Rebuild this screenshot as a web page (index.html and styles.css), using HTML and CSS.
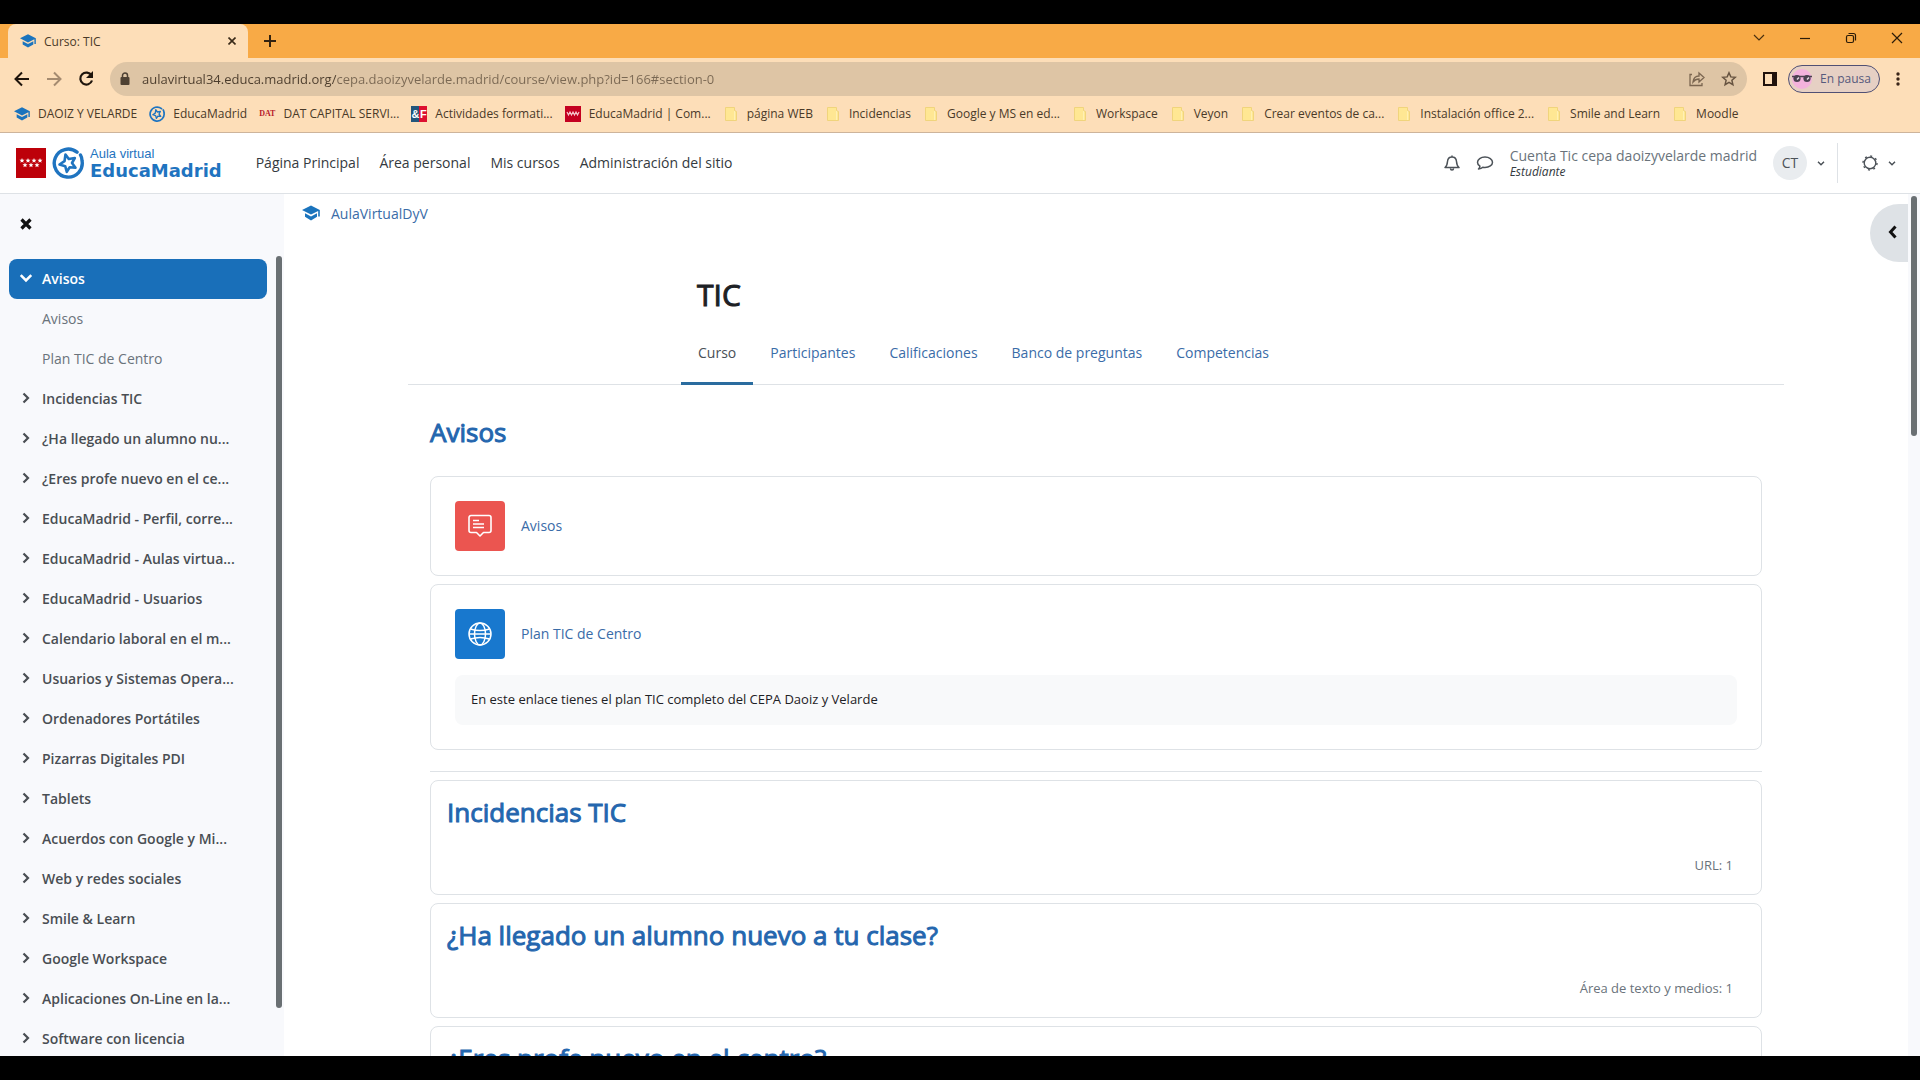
FILE: index.html
```html
<!DOCTYPE html>
<html lang="es">
<head>
    <meta charset="UTF-8">
    <meta name="viewport" content="width=device-width, initial-scale=1.0">
    <title>Curso: TIC</title>
    <link rel="stylesheet" href="styles.css">
</head>
<body>
    <!-- Iconos reutilizados -->
    <svg class="sprite" aria-hidden="true">
        <symbol id="cap" viewBox="0 0 18 16">
            <path fill="#1b74bd" d="M9 0.5L0 5l9 4.6L16.2 6v5.5h1.6V5z"/>
            <path fill="#1b74bd" d="M3 8.2v3.6L9 15.4l6-3.6V8.2l-6 3.2z"/>
        </symbol>
        <symbol id="educa" viewBox="0 0 32 32">
            <g fill="none" stroke="#1f74c0" stroke-linecap="round" stroke-linejoin="round">
                <path stroke-width="3.4" d="M25 5.2A14 14 0 1 0 30 13.500c0-2.200-.6-4-1.500-5.500"/>
                <path stroke-width="2.600" d="M13.500 7.500l3.300 4.500 6-1-2.800 5 3.500 4.800-5.800-.5-2.900 4.500-1.600-5.600-5.700-1.700 5-3.300z"/>
            </g>
        </symbol>
        <symbol id="folder" viewBox="0 0 16 16">
            <path fill="#ffe793" stroke="#f0d47c" d="M2.500 1.500h9v3l2 1v9h-11z"/>
            <path fill="none" stroke="#fff0b4" d="M11.500 5v9"/>
        </symbol>
        <symbol id="right" viewBox="0 0 10 12">
            <path fill="none" stroke="currentColor" stroke-width="2.200" d="M2.500 1.500L7 6l-4.500 4.500"/>
        </symbol>
        <symbol id="down" viewBox="0 0 12 10">
            <path fill="none" stroke="currentColor" stroke-width="2.200" d="M1.500 2.500L6 7l4.500-4.500"/>
        </symbol>
    </svg>

    <!-- Pestañas del navegador -->
    <div class="tab-strip">
        <div class="tab">
            <svg class="icon-16"><use href="#cap"/></svg>
            <span class="tab-title">Curso: TIC</span>
            <button class="icon-btn" aria-label="Cerrar pestaña">
                <svg width="8" height="8" viewBox="0 0 8 8"><path stroke="#3a2a18" stroke-width="1.600" d="M.5.5l7 7M7.500.5l-7 7"/></svg>
            </button>
        </div>
        <button class="icon-btn" aria-label="Nueva pestaña">
            <svg width="12" height="12" viewBox="0 0 12 12"><path stroke="#33220f" stroke-width="2" d="M6 0v12M0 6h12"/></svg>
        </button>
        <div class="window-buttons">
            <button class="icon-btn" aria-label="Buscar pestañas"><svg width="12" height="12" viewBox="0 0 12 12"><path fill="none" stroke="#4a3010" stroke-width="1.200" d="M1 3l5 5 5-5"/></svg></button>
            <button class="icon-btn" aria-label="Minimizar"><svg width="12" height="12" viewBox="0 0 12 12"><path stroke="#2c1c08" stroke-width="1.200" d="M1 6.500h10"/></svg></button>
            <button class="icon-btn" aria-label="Restaurar"><svg width="12" height="12" viewBox="0 0 12 12"><g fill="none" stroke="#2c1c08" stroke-width="1.200"><rect x="1.500" y="3.500" width="7" height="7" rx="1.500"/><path d="M3.500 1.500h5a2 2 0 0 1 2 2v5"/></g></svg></button>
            <button class="icon-btn" aria-label="Cerrar"><svg width="12" height="12" viewBox="0 0 12 12"><path stroke="#2c1c08" stroke-width="1.200" d="M1 1l10 10M11 1L1 11"/></svg></button>
        </div>
    </div>

    <!-- Barra de direcciones -->
    <div class="toolbar">
        <button class="icon-btn" aria-label="Atrás"><svg width="16" height="16" viewBox="0 0 16 16"><path fill="none" stroke="#1f150c" stroke-width="2" d="M15 8H2M8 1.500L1.500 8 8 14.500"/></svg></button>
        <button class="icon-btn" aria-label="Adelante"><svg width="16" height="16" viewBox="0 0 16 16"><path fill="none" stroke="#a58b70" stroke-width="2" d="M1 8h13M8 1.500L14.500 8 8 14.500"/></svg></button>
        <button class="icon-btn" aria-label="Recargar"><svg width="16" height="16" viewBox="0 0 16 16"><path fill="none" stroke="#1f150c" stroke-width="2.200" d="M13.500 4.500A6 6 0 1 0 14 9.500"/><path fill="#1f150c" d="M15 0v7H8z"/></svg></button>
        <div class="address">
            <svg width="10" height="14" viewBox="0 0 10 14"><rect x="0.500" y="5" width="9" height="8" rx="1" fill="#4e4133"/><path fill="none" stroke="#4e4133" stroke-width="1.500" d="M2.500 6V3.500a2.500 2.500 0 0 1 5 0V6"/></svg>
            <input class="address-input" type="text" aria-label="Dirección" value="aulavirtual34.educa.madrid.org/cepa.daoizyvelarde.madrid/course/view.php?id=166#section-0">
            <button class="icon-btn" aria-label="Compartir"><svg width="16" height="16" viewBox="0 0 16 16"><path fill="none" stroke="#7b6650" stroke-width="1.300" d="M3 3.500H1v11h12V12M4 11c.5-4 3-6 6-6V2l5 4.500-5 4.500V8c-3 0-4.500 1-6 3z"/></svg></button>
            <button class="icon-btn" aria-label="Añadir a marcadores"><svg width="16" height="16" viewBox="0 0 16 16"><path fill="none" stroke="#675441" stroke-width="1.500" d="M8 1.800l1.800 4.100 4.500.4-3.400 3 1 4.400L8 11.400l-3.900 2.300 1-4.400-3.400-3 4.500-.4z"/></svg></button>
        </div>
        <button class="icon-btn" aria-label="Panel lateral"><svg width="14" height="14" viewBox="0 0 14 14"><path fill="none" stroke="#20120c" stroke-width="2" d="M1 1h12v12H1z"/><path fill="#20120c" d="M9 1h4v12H9z"/></svg></button>
        <button class="profile">
            <svg width="20" height="20" viewBox="0 0 20 20"><circle cx="10" cy="10" r="10" fill="#f3b2dc"/><circle cx="5" cy="9.500" r="3.600" fill="#4b4150"/><circle cx="15" cy="9.500" r="3.600" fill="#4b4150"/><path stroke="#4b4150" stroke-width="1.500" d="M0 7.500h20"/><path stroke="#e8dce6" stroke-width="1.500" d="M5 10.500l2-2M15 10.500l2-2"/></svg>
            En pausa
        </button>
        <button class="icon-btn" aria-label="Menú"><svg width="4" height="14" viewBox="0 0 4 14"><g fill="#3a2418"><circle cx="2" cy="2" r="1.700"/><circle cx="2" cy="7" r="1.700"/><circle cx="2" cy="12" r="1.700"/></g></svg></button>
    </div>

    <nav class="bookmarks" aria-label="Marcadores">
        <a href="#"><svg class="icon-16"><use href="#cap"/></svg>DAOIZ Y VELARDE</a>
        <a href="#"><svg class="icon-16"><use href="#educa"/></svg>EducaMadrid</a>
        <a href="#"><span class="dat">DAT</span>DAT CAPITAL SERVI...</a>
        <a href="#"><span class="af"><b>&amp;</b><b>F</b></span>Actividades formati...</a>
        <a href="#"><svg class="icon-16" viewBox="0 0 16 16"><path fill="#c40020" d="M0 0h16v16H0z"/><path fill="none" stroke="#f6c9cf" stroke-width="1.200" d="M2 6l1.500 3L5 6l1.500 3L8 6l1.500 3L11 6l1.500 3L14 6"/></svg>EducaMadrid | Com...</a>
        <a href="#"><svg class="icon-16"><use href="#folder"/></svg>página WEB</a>
        <a href="#"><svg class="icon-16"><use href="#folder"/></svg>Incidencias</a>
        <a href="#"><svg class="icon-16"><use href="#folder"/></svg>Google y MS en ed...</a>
        <a href="#"><svg class="icon-16"><use href="#folder"/></svg>Workspace</a>
        <a href="#"><svg class="icon-16"><use href="#folder"/></svg>Veyon</a>
        <a href="#"><svg class="icon-16"><use href="#folder"/></svg>Crear eventos de ca...</a>
        <a href="#"><svg class="icon-16"><use href="#folder"/></svg>Instalación office 2...</a>
        <a href="#"><svg class="icon-16"><use href="#folder"/></svg>Smile and Learn</a>
        <a href="#"><svg class="icon-16"><use href="#folder"/></svg>Moodle</a>
    </nav>

    <!-- Cabecera del aula virtual -->
    <header class="navbar">
        <a class="brand" href="#">
            <svg width="30" height="30" viewBox="0 0 30 30">
                <path fill="#bd0009" d="M0 0h30v30H0z"/>
                <defs><path id="star" fill="#fff" d="M0-2.500l.7 1.700 1.800.1L1.100.5l.5 1.800L0 1.300l-1.600 1 .5-1.800-1.400-1.200 1.800-.1z"/></defs>
                <use href="#star" x="6" y="12.500"/><use href="#star" x="12" y="12.500"/><use href="#star" x="18" y="12.500"/><use href="#star" x="24" y="12.500"/>
                <use href="#star" x="9" y="17"/><use href="#star" x="15" y="17"/><use href="#star" x="21" y="17"/>
            </svg>
            <svg width="32" height="32"><use href="#educa"/></svg>
            <span class="brand-text"><span>Aula virtual</span><strong>EducaMadrid</strong></span>
        </a>
        <nav class="primary-nav">
            <a href="#">Página Principal</a>
            <a href="#">Área personal</a>
            <a href="#">Mis cursos</a>
            <a href="#">Administración del sitio</a>
        </nav>
        <div class="user-nav">
            <button class="icon-btn" aria-label="Notificaciones"><svg width="16" height="16" viewBox="0 0 16 16"><path fill="none" stroke="#4c5258" stroke-width="1.500" stroke-linejoin="round" d="M8 .5V2M1 12.500C3 11 3.300 9 3.500 6.500 3.700 3.500 5.500 2 8 2s4.300 1.500 4.500 4.500c.2 2.500.5 4.500 2.500 6zM6.500 13.500a1.500 1.500 0 0 0 3 0"/></svg></button>
            <button class="icon-btn" aria-label="Mensajes"><svg width="18" height="16" viewBox="0 0 18 16"><path fill="none" stroke="#4c5258" stroke-width="1.500" stroke-linejoin="round" d="M9 2c4.200 0 7.500 2.300 7.500 5.200s-3.300 5.200-7.500 5.200c-.8 0-1.500-.1-2.200-.2-1 1-2.300 1.600-4.300 1.800.8-.8 1.300-1.600 1.400-2.800C2.400 10.200 1.500 8.800 1.500 7.200 1.500 4.300 4.800 2 9 2z"/></svg></button>
            <div class="user-name"><span>Cuenta Tic cepa daoizyvelarde madrid</span><em>Estudiante</em></div>
            <button class="user-menu" aria-label="Menú de usuario"><span class="avatar">CT</span><svg width="8" height="7" viewBox="0 0 12 10"><use href="#down"/></svg></button>
            <button class="settings" aria-label="Ajustes">
                <svg width="16" height="16" viewBox="0 0 16 16"><circle cx="8" cy="8" r="5.800" fill="none" stroke="#4c5258" stroke-width="1.400"/><circle cx="8" cy="8" r="7" fill="none" stroke="#4c5258" stroke-width="1.400" stroke-dasharray="2 3.500"/></svg>
                <svg width="8" height="7" viewBox="0 0 12 10"><use href="#down"/></svg>
            </button>
        </div>
    </header>

    <div class="page">
        <!-- Índice del curso -->
        <aside class="drawer">
            <button class="close" aria-label="Cerrar índice del curso"><svg width="12" height="12" viewBox="0 0 12 12"><path stroke="#111" stroke-width="3.200" d="M1.500 1.500l9 9M10.500 1.500l-9 9"/></svg></button>
            <div class="drawer-body">
                <ul class="index">
                    <li class="active"><a href="#"><svg><use href="#down"/></svg>Avisos</a></li>
                    <li class="sub"><a href="#">Avisos</a></li>
                    <li class="sub"><a href="#">Plan TIC de Centro</a></li>
                    <li><a href="#"><svg><use href="#right"/></svg>Incidencias TIC</a></li>
                    <li><a href="#"><svg><use href="#right"/></svg>¿Ha llegado un alumno nu...</a></li>
                    <li><a href="#"><svg><use href="#right"/></svg>¿Eres profe nuevo en el ce...</a></li>
                    <li><a href="#"><svg><use href="#right"/></svg>EducaMadrid - Perfil, corre...</a></li>
                    <li><a href="#"><svg><use href="#right"/></svg>EducaMadrid - Aulas virtua...</a></li>
                    <li><a href="#"><svg><use href="#right"/></svg>EducaMadrid - Usuarios</a></li>
                    <li><a href="#"><svg><use href="#right"/></svg>Calendario laboral en el m...</a></li>
                    <li><a href="#"><svg><use href="#right"/></svg>Usuarios y Sistemas Opera...</a></li>
                    <li><a href="#"><svg><use href="#right"/></svg>Ordenadores Portátiles</a></li>
                    <li><a href="#"><svg><use href="#right"/></svg>Pizarras Digitales PDI</a></li>
                    <li><a href="#"><svg><use href="#right"/></svg>Tablets</a></li>
                    <li><a href="#"><svg><use href="#right"/></svg>Acuerdos con Google y Mi...</a></li>
                    <li><a href="#"><svg><use href="#right"/></svg>Web y redes sociales</a></li>
                    <li><a href="#"><svg><use href="#right"/></svg>Smile &amp; Learn</a></li>
                    <li><a href="#"><svg><use href="#right"/></svg>Google Workspace</a></li>
                    <li><a href="#"><svg><use href="#right"/></svg>Aplicaciones On-Line en la...</a></li>
                    <li><a href="#"><svg><use href="#right"/></svg>Software con licencia</a></li>
                </ul>
                <div class="scroll-track"><div class="thumb drawer-thumb"></div></div>
            </div>
        </aside>

        <main class="main">
            <a class="breadcrumb" href="#"><svg width="18" height="16"><use href="#cap"/></svg>AulaVirtualDyV</a>
            <h1>TIC</h1>
            <div class="tabs-row">
                <nav class="tabs">
                    <a class="current" href="#">Curso</a>
                    <a href="#">Participantes</a>
                    <a href="#">Calificaciones</a>
                    <a href="#">Banco de preguntas</a>
                    <a href="#">Competencias</a>
                </nav>
            </div>
            <div class="course">
                <h2>Avisos</h2>
                <div class="card activity">
                    <div class="activity-head">
                        <span class="activity-icon forum"><svg width="24" height="24" viewBox="0 0 24 24"><path fill="none" stroke="#fff" stroke-width="1.600" stroke-linejoin="round" d="M3 1.500h18a2 2 0 0 1 2 2v13a2 2 0 0 1-2 2h-5.500L12 22l-3.500-3.500H3a2 2 0 0 1-2-2v-13a2 2 0 0 1 2-2z"/><path stroke="#fff" stroke-width="1.500" d="M5 6.500h6M5 10h11M5 13.500h11"/></svg></span>
                        <a href="#">Avisos</a>
                    </div>
                </div>
                <div class="card activity">
                    <div class="activity-head">
                        <span class="activity-icon url"><svg width="24" height="24" viewBox="0 0 24 24"><g fill="none" stroke="#fff" stroke-width="1.500"><circle cx="12" cy="12" r="11"/><ellipse cx="12" cy="12" rx="5.500" ry="11"/><path d="M1 12h22M2.500 7c6 2 13 2 19 0M2.500 17c6-2 13-2 19 0"/></g></svg></span>
                        <a href="#">Plan TIC de Centro</a>
                    </div>
                    <p class="description">En este enlace tienes el plan TIC completo del CEPA Daoiz y Velarde</p>
                </div>
                <hr>
                <div class="card section"><h3>Incidencias TIC</h3><p>URL: 1</p></div>
                <div class="card section"><h3>¿Ha llegado un alumno nuevo a tu clase?</h3><p>Área de texto y medios: 1</p></div>
                <div class="card section"><h3>¿Eres profe nuevo en el centro?</h3></div>
            </div>
            <button class="drawer-toggle" aria-label="Abrir cajón de bloques"><svg width="9" height="14" viewBox="0 0 9 14"><path fill="none" stroke="#111" stroke-width="3" d="M7.500 1.500L2.500 7l5 5.500"/></svg></button>
        </main>
        <div class="page-scroll"><div class="thumb page-thumb"></div></div>
    </div>
</body>
</html>
```
FILE: styles.css
```css
* {
    margin: 0;
    padding: 0;
    box-sizing: border-box;
}
body {
    font-family: "Open Sans", sans-serif;
    font-size: 14px;
    background-color: #000;
    color: #1d2125;
    display: flex;
    flex-direction: column;
    height: 100vh;
    padding: 24px 0;
    overflow: hidden;
}
a {
    color: inherit;
    text-decoration: none;
}
button {
    border: none;
    background: none;
    font-family: inherit;
    cursor: pointer;
}
svg {
    flex: none;
}
ul {
    list-style-type: none;
}
.sprite {
    position: absolute;
    width: 0;
    height: 0;
}
.icon-16 {
    width: 16px;
    height: 16px;
}
.icon-btn {
    display: flex;
    align-items: center;
    justify-content: center;
}

/* navegador */
.tab-strip {
    flex: none;
    height: 34px;
    background-color: #f8aa46;
    display: flex;
    align-items: center;
    gap: 16px;
    padding-left: 8px;
}
.tab {
    width: 240px;
    height: 100%;
    background-color: #fddeb8;
    border-radius: 8px 8px 0 0;
    display: flex;
    align-items: center;
    gap: 8px;
    padding: 0 12px;
    font-size: 12px;
    color: #4a3a28;
}
.tab-title {
    flex: 1;
}
.window-buttons {
    align-self: flex-start;
    margin-left: auto;
    display: flex;
}
.window-buttons .icon-btn {
    width: 46px;
    height: 28px;
}
.toolbar {
    flex: none;
    height: 41px;
    background-color: #fddeb8;
    display: flex;
    align-items: center;
    gap: 16px;
    padding: 0 20px 0 14px;
}
.address {
    flex: 1;
    height: 34px;
    border-radius: 17px;
    background-color: #dec5a5;
    display: flex;
    align-items: center;
    gap: 16px;
    padding: 0 10px;
}
.address-input {
    flex: 1;
    border: none;
    outline: none;
    font-family: inherit;
    font-size: 13px;
    /* el dominio va más oscuro que la ruta */
    background: linear-gradient(90deg, #4b3c2c 194px, #7a6853 194px) text;
    color: transparent;
    margin-left: -4px;
}
.profile {
    height: 28px;
    border: 1px solid #505074;
    border-radius: 14px;
    background-color: #e6d0c4;
    color: #56597c;
    display: flex;
    align-items: center;
    gap: 8px;
    margin-left: -5px;
    padding: 0 8px 0 3px;
    font-size: 12px;
}
.bookmarks {
    flex: none;
    height: 34px;
    background-color: #fddeb8;
    border-bottom: 1px solid #cdb49b;
    display: flex;
    align-items: center;
    gap: 12px;
    padding: 0 14px 4px;
    font-size: 12px;
    color: #4a3a28;
    white-space: nowrap;
}
.bookmarks a {
    display: flex;
    align-items: center;
    gap: 8px;
}
.dat {
    font-family: "Liberation Serif", serif;
    font-size: 8px;
    font-weight: bold;
    color: #b8202a;
}
.af {
    width: 16px;
    height: 16px;
    display: grid;
    grid-template-columns: 1fr 1fr;
    font-family: "Liberation Sans", sans-serif;
    font-size: 11px;
    line-height: 16px;
    text-align: center;
    color: #fff;
    background: linear-gradient(90deg, #23567c 50%, #dd1030 50%);
}

/* cabecera */
.navbar {
    flex: none;
    height: 61px;
    background-color: #fff;
    border-bottom: 1px solid #dee2e6;
    display: flex;
    align-items: center;
    padding: 0 24px 0 16px;
}
.brand {
    display: flex;
    align-items: center;
    gap: 6px;
    color: #1f74c0;
    font-family: "Liberation Sans", Arial, sans-serif;
}
.brand-text {
    display: flex;
    flex-direction: column;
    font-size: 13px;
    line-height: 16px;
}
.brand-text strong {
    font-family: "DejaVu Sans", sans-serif;
    font-size: 18px;
    line-height: 18px;
}
.primary-nav {
    display: flex;
    gap: 20px;
    margin-left: 34px;
    padding-bottom: 2px;
    color: #343a40;
}
.user-nav {
    margin-left: auto;
    display: flex;
    align-items: center;
    gap: 16px;
    color: #4c5258;
}
.user-name {
    display: flex;
    flex-direction: column;
    line-height: 18px;
    color: #6a737b;
}
.user-name em {
    font-size: 12px;
    line-height: 14px;
    color: #343a40;
}
.user-menu, .settings {
    display: flex;
    align-items: center;
    gap: 10px;
    color: #4c5258;
}
.user-menu {
    margin-right: -4px;
}
.avatar {
    width: 34px;
    height: 34px;
    border-radius: 50%;
    background-color: #e9ecef;
    font-size: 14px;
    line-height: 34px;
}
.settings {
    height: 40px;
    border-left: 1px solid #dee2e6;
    padding-left: 24px;
}

/* contenido */
.page {
    flex: 1;
    min-height: 0;
    display: flex;
    background-color: #fff;
}
.drawer {
    width: 284px;
    flex: none;
    background-color: #f8f9fc;
    display: flex;
    flex-direction: column;
    overflow: hidden;
}
.close {
    flex: none;
    height: 62px;
    padding: 0 20px 2px;
    display: flex;
    align-items: center;
}
.drawer-body {
    flex: 1;
    min-height: 0;
    display: flex;
    gap: 9px;
}
.index {
    flex: 1;
    padding: 3px 0 0 9px;
}
.index a {
    height: 40px;
    display: flex;
    align-items: center;
    gap: 9px;
    padding: 0 0 2px 10px;
    color: #494e53;
    font-size: 14px;
    font-weight: 600;
    white-space: nowrap;
}
.index svg {
    width: 14px;
    height: 12px;
}
.index .active a {
    background-color: #196fb9;
    color: #fff;
    border-radius: 8px;
}
.index .sub a {
    padding-left: 33px;
    color: #6a737b;
    font-weight: 400;
}
.scroll-track {
    width: 8px;
    overflow: hidden;
}
.thumb {
    width: 6px;
    border-radius: 3px;
    background-color: #6a7073;
}
.drawer-thumb {
    height: 94%;
}
.main {
    flex: 1;
    position: relative;
    overflow: hidden;
}
.breadcrumb {
    display: flex;
    align-items: center;
    gap: 11px;
    height: 38px;
    padding-left: 18px;
    font-size: 14px;
    color: #3a6ca8;
}
h1, h2, h3 {
    font-weight: 500;
    -webkit-text-stroke: 1px;
}
h1 {
    max-width: 830px;
    margin: 38px auto 0;
    padding-left: 16px;
    font-size: 30px;
    line-height: 50px;
}
.tabs-row {
    max-width: 1376px;
    margin: 0 auto;
    border-bottom: 1px solid #dee2e6;
}
.tabs {
    max-width: 830px;
    height: 65px;
    margin: 0 auto -1px;
    display: flex;
}
.tabs a {
    padding: 0 17px;
    line-height: 66px;
    color: #3a6ca8;
}
.tabs .current {
    color: #495057;
    border-bottom: 3px solid #2a6c9f;
}
.course {
    max-width: 1332px;
    margin: 0 auto;
}
h2, h3 {
    color: #2466ae;
    font-size: 26px;
    line-height: 32px;
}
h2 {
    margin: 31px 0 28px;
}
.card {
    border: 1px solid #dee2e6;
    border-radius: 8px;
    margin-bottom: 8px;
}
.activity {
    padding: 24px;
}
.activity-head {
    display: flex;
    align-items: center;
    gap: 16px;
    color: #3a6ca8;
}
.activity-head a {
    padding-bottom: 2px;
}
.activity-icon {
    width: 50px;
    height: 50px;
    border-radius: 4px;
    display: flex;
    align-items: center;
    justify-content: center;
}
.forum {
    background-color: #eb5550;
}
.url {
    background-color: #1878ce;
}
.description {
    margin-top: 16px;
    padding: 15px 16px 16px;
    border-radius: 8px;
    background-color: #f8f9fa;
    font-size: 13px;
    line-height: 19px;
}
hr {
    border: none;
    border-top: 1px solid #dee2e6;
    margin: 21px 0 8px;
}
.section {
    padding: 15px 28px 16px 16px;
}
.section p {
    margin-top: 28px;
    padding-bottom: 4px;
    text-align: right;
    font-size: 13px;
    line-height: 18px;
    color: #6a737b;
}
.drawer-toggle {
    position: absolute;
    top: 10px;
    right: 0;
    width: 38px;
    height: 58px;
    border-radius: 29px 0 0 29px;
    background-color: #dee2e6;
    display: flex;
    align-items: center;
    justify-content: flex-end;
    padding: 0 11px 2px 0;
}
.page-scroll {
    width: 12px;
    flex: none;
    background-color: #f8f9fc;
    padding: 2px 3px;
}
.page-thumb {
    height: 28%;
}
```
